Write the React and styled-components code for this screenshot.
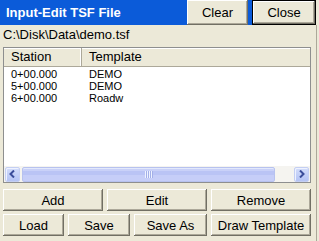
import React from 'react';
import styled, { createGlobalStyle } from 'styled-components';

const GlobalStyle = createGlobalStyle`
  html, body { margin: 0; padding: 0; background: #ece9d8; }
  body { font-family: "Liberation Sans", Arial, sans-serif; font-size: 13px; color: #000; }
`;

const stations = [
  { station: '0+00.000', template: 'DEMO' },
  { station: '5+00.000', template: 'DEMO' },
  { station: '6+00.000', template: 'Roadw' },
];

const Window = styled.div`
  width: 319px;
  height: 241px;
  background: #ece9d8;
  display: flex;
  flex-direction: column;
  overflow: hidden;
`;

const TitleRow = styled.div`
  display: flex;
  height: 25px;
  padding-right: 3px;
`;

const Title = styled.div`
  flex: 1;
  background: #0b5bd9;
  color: #fff;
  font-weight: bold;
  padding-left: 6px;
  line-height: 25px;
`;

const BlueGap = styled.div`
  width: 4px;
  background: #0b5bd9;
`;

const Button = styled.button`
  font-family: inherit;
  font-size: 13px;
  color: #000;
  background: #ece9d8;
  border: ${(p) => (p.$default ? '1px solid #000' : 'none')};
  width: ${(p) => (p.$width ? `${p.$width}px` : 'auto')};
  height: ${(p) => p.$height || 22}px;
  padding: 0;
  margin: 0;
  box-shadow: inset -1px -1px #716f64, inset 1px 1px #fff, inset -2px -2px #aca899;
  text-align: center;
`;

const Body = styled.div`
  flex: 1;
  display: flex;
  flex-direction: column;
  padding: 0 3px 0 3px;
  margin-right: 2px;
  border-right: 1px solid #aca899;
`;

const PathLabel = styled.div`
  height: 22px;
  line-height: 18px;
  padding-top: 1px;
  box-sizing: border-box;
  white-space: nowrap;
`;

const ListBox = styled.div`
  height: 136px;
  border: 1px solid #8e8f8f;
  background: #fff;
  display: flex;
  flex-direction: column;
  box-sizing: border-box;
  margin-right: 2px;
`;

const HeaderRow = styled.div`
  display: grid;
  grid-template-columns: 78px 1fr;
  height: 18px;
  background: #ece9d8;
  border-bottom: 1px solid #aca899;
  box-shadow: inset 0 1px #fff;
`;

const HeaderCell = styled.div`
  line-height: 18px;
  padding-left: 7px;
  border-right: ${(p) => (p.$last ? 'none' : '1px solid #aca899')};
  box-shadow: ${(p) => (p.$last ? 'none' : 'inset -1px 0 #fff')};
`;

const Rows = styled.div`
  flex: 1;
  padding-top: 1px;
`;

const Row = styled.div`
  display: grid;
  grid-template-columns: 78px 1fr;
  height: 12px;
  line-height: 12px;
  font-size: 11px;
`;

const Cell = styled.div`
  padding-left: 7px;
  white-space: nowrap;
`;

const ScrollBar = styled.div`
  height: 16px;
  display: flex;
  align-items: center;
  gap: 2px;
  padding: 0 1px;
  background: #f5f4f0;
`;

const Arrow = styled.div`
  width: 15px;
  height: 15px;
  box-sizing: border-box;
  border: 1px solid #c4cff3;
  border-radius: 2px;
  background: linear-gradient(#d3ddfb, #b4c3f4);
  box-shadow: inset 1px 1px #eef2ff;
  display: flex;
  align-items: center;
  justify-content: center;
`;

const Track = styled.div`
  flex: 1;
  height: 15px;
  display: flex;
`;

const Thumb = styled.div`
  width: 253px;
  box-sizing: border-box;
  border: 1px solid #b7c2ef;
  border-radius: 2px;
  background: linear-gradient(#c9d1f8 0 3px, #bac4f5 3px 7px, #c6cef8 7px);
  display: flex;
  align-items: center;
  justify-content: center;
  box-shadow: inset 0 1px #e2e8fc;
`;

const Grip = styled.div`
  width: 8px;
  height: 7px;
  background: repeating-linear-gradient(90deg, #eef2ff 0 1px, #a3b0e8 1px 2px);
`;

const ButtonRow = styled.div`
  display: grid;
  grid-template-columns: ${(p) => p.$cols};
  gap: 4px;
  margin-top: ${(p) => p.$top}px;
  margin-right: 2px;
`;

const ArrowIcon = ({ dir }) => (
  <svg width="7" height="8" viewBox="0 0 7 8">
    <path
      d={dir === 'left' ? 'M5 0.5 L1.5 4 L5 7.5' : 'M2 0.5 L5.5 4 L2 7.5'}
      fill="none"
      stroke="#3a4d9a"
      strokeWidth="2"
    />
  </svg>
);

export default function App() {
  return (
    <>
      <GlobalStyle />
      <Window>
        <TitleRow>
          <Title>Input-Edit TSF File</Title>
          <Button $width={61} $height={25}>Clear</Button>
          <BlueGap />
          <Button $width={64} $height={25} $default>Close</Button>
        </TitleRow>
        <Body>
          <PathLabel>C:\Disk\Data\demo.tsf</PathLabel>
          <ListBox>
            <HeaderRow>
              <HeaderCell>Station</HeaderCell>
              <HeaderCell $last>Template</HeaderCell>
            </HeaderRow>
            <Rows>
              {stations.map((s) => (
                <Row key={s.station}>
                  <Cell>{s.station}</Cell>
                  <Cell>{s.template}</Cell>
                </Row>
              ))}
            </Rows>
            <ScrollBar>
              <Arrow><ArrowIcon dir="left" /></Arrow>
              <Track>
                <Thumb><Grip /></Thumb>
              </Track>
              <Arrow><ArrowIcon dir="right" /></Arrow>
            </ScrollBar>
          </ListBox>
          <ButtonRow $cols="1fr 1fr 1fr" $top={6}>
            <Button>Add</Button>
            <Button>Edit</Button>
            <Button>Remove</Button>
          </ButtonRow>
          <ButtonRow $cols="61px 62px 73px 1fr" $top={3}>
            <Button>Load</Button>
            <Button>Save</Button>
            <Button>Save As</Button>
            <Button>Draw Template</Button>
          </ButtonRow>
        </Body>
      </Window>
    </>
  );
}
